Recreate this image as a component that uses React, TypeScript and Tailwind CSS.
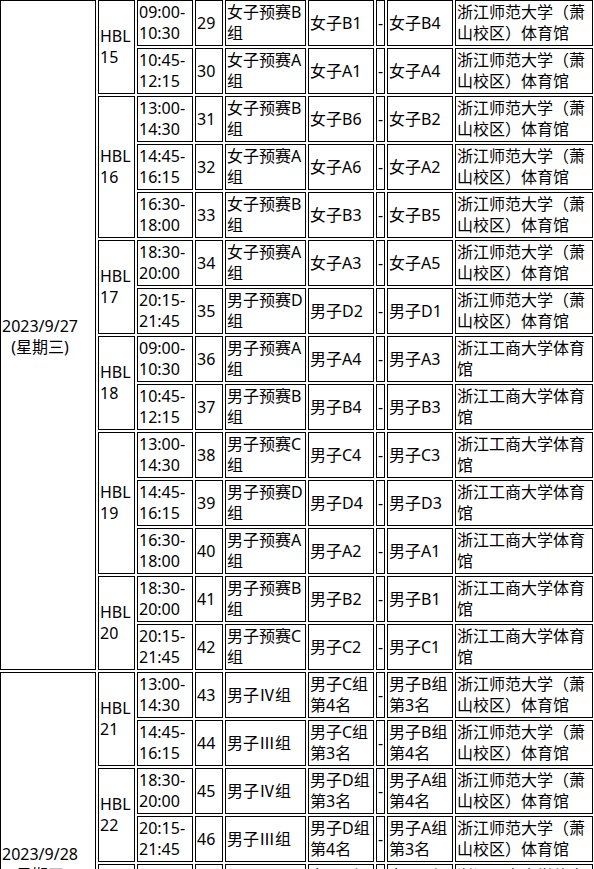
import React from 'react';

interface Game {
    no: number;
    time: [string, string];
    group: string[];
    home: string[];
    away: string[];
    venue: string[];
}

interface Round {
    code: string;
    games: Game[];
}

interface Day {
    date: string;
    week: string;
    rounds: Round[];
}

const SF = ['浙江师范大学（萧', '山校区）体育馆'];
const GS = ['浙江工商大学体育', '馆'];

const g = (no: number, t1: string, t2: string, group: string[], home: string[], away: string[], venue: string[]): Game => ({
    no,
    time: [t1, t2],
    group,
    home,
    away,
    venue,
});

const days: Day[] = [
    {
        date: '2023/9/27',
        week: '(星期三)',
        rounds: [
            {
                code: '15',
                games: [
                    g(29, '09:00-', '10:30', ['女子预赛B', '组'], ['女子B1'], ['女子B4'], SF),
                    g(30, '10:45-', '12:15', ['女子预赛A', '组'], ['女子A1'], ['女子A4'], SF),
                ],
            },
            {
                code: '16',
                games: [
                    g(31, '13:00-', '14:30', ['女子预赛B', '组'], ['女子B6'], ['女子B2'], SF),
                    g(32, '14:45-', '16:15', ['女子预赛A', '组'], ['女子A6'], ['女子A2'], SF),
                    g(33, '16:30-', '18:00', ['女子预赛B', '组'], ['女子B3'], ['女子B5'], SF),
                ],
            },
            {
                code: '17',
                games: [
                    g(34, '18:30-', '20:00', ['女子预赛A', '组'], ['女子A3'], ['女子A5'], SF),
                    g(35, '20:15-', '21:45', ['男子预赛D', '组'], ['男子D2'], ['男子D1'], SF),
                ],
            },
            {
                code: '18',
                games: [
                    g(36, '09:00-', '10:30', ['男子预赛A', '组'], ['男子A4'], ['男子A3'], GS),
                    g(37, '10:45-', '12:15', ['男子预赛B', '组'], ['男子B4'], ['男子B3'], GS),
                ],
            },
            {
                code: '19',
                games: [
                    g(38, '13:00-', '14:30', ['男子预赛C', '组'], ['男子C4'], ['男子C3'], GS),
                    g(39, '14:45-', '16:15', ['男子预赛D', '组'], ['男子D4'], ['男子D3'], GS),
                    g(40, '16:30-', '18:00', ['男子预赛A', '组'], ['男子A2'], ['男子A1'], GS),
                ],
            },
            {
                code: '20',
                games: [
                    g(41, '18:30-', '20:00', ['男子预赛B', '组'], ['男子B2'], ['男子B1'], GS),
                    g(42, '20:15-', '21:45', ['男子预赛C', '组'], ['男子C2'], ['男子C1'], GS),
                ],
            },
        ],
    },
    {
        date: '2023/9/28',
        week: '(星期四)',
        rounds: [
            {
                code: '21',
                games: [
                    g(43, '13:00-', '14:30', ['男子Ⅳ组'], ['男子C组', '第4名'], ['男子B组', '第3名'], SF),
                    g(44, '14:45-', '16:15', ['男子Ⅲ组'], ['男子C组', '第3名'], ['男子B组', '第4名'], SF),
                ],
            },
            {
                code: '22',
                games: [
                    g(45, '18:30-', '20:00', ['男子Ⅳ组'], ['男子D组', '第3名'], ['男子A组', '第4名'], SF),
                    g(46, '20:15-', '21:45', ['男子Ⅲ组'], ['男子D组', '第4名'], ['男子A组', '第3名'], SF),
                ],
            },
            {
                code: '23',
                games: [
                    g(47, '13:00-', '14:30', ['女子Ⅳ组'], ['女子A组', '第3名'], ['女子B组', '第4名'], GS),
                    g(48, '14:45-', '16:15', ['女子Ⅲ组'], ['女子A组', '第4名'], ['女子B组', '第3名'], GS),
                ],
            },
            {
                code: '24',
                games: [
                    g(49, '18:30-', '20:00', ['女子Ⅳ组'], ['女子B组', '第3名'], ['女子A组', '第4名'], GS),
                    g(50, '20:15-', '21:45', ['女子Ⅲ组'], ['女子B组', '第4名'], ['女子A组', '第3名'], GS),
                ],
            },
        ],
    },
];

// 1px black border, 1px padding, like an old border=1 table
const cell = 'border border-black p-px align-middle overflow-hidden';

const Lines = ({ lines }: { lines: string[] }) => (
    <>
        {lines.map((l, i) => (
            <React.Fragment key={i}>
                {i > 0 && <br />}
                {l}
            </React.Fragment>
        ))}
    </>
);

const App = () => {
    return (
        <div
            className="h-[869px] w-[594px] overflow-hidden bg-white text-black text-[16px] leading-[21px]"
            style={{ fontFamily: '"Noto Sans", "Noto Sans CJK SC", sans-serif' }}
        >
            <table className="-ml-[2px] -mt-[2px] w-[597px] table-fixed border-separate border-spacing-0.5 whitespace-nowrap text-left">
                <colgroup>
                    <col className="w-[96px]" />
                    <col className="w-[37px]" />
                    <col className="w-[56px]" />
                    <col className="w-[28px]" />
                    <col className="w-[81px]" />
                    <col className="w-[66px]" />
                    <col className="w-[9px]" />
                    <col className="w-[66px]" />
                    <col className="w-[138px]" />
                </colgroup>
                <tbody>
                    {days.map((day) => {
                        const dayRows = day.rounds.reduce((n, r) => n + r.games.length, 0);
                        return day.rounds.map((round, ri) =>
                            round.games.map((game, gi) => (
                                <tr key={game.no} className="h-[46px]">
                                    {ri === 0 && gi === 0 && (
                                        <td
                                            rowSpan={dayRows}
                                            className="border border-black pt-[5px] pb-px pl-px pr-[17px] align-middle text-center overflow-visible"
                                        >
                                            {day.date}
                                            <br />
                                            {day.week}
                                        </td>
                                    )}
                                    {gi === 0 && (
                                        <td rowSpan={round.games.length} className={cell}>
                                            HBL
                                            <br />
                                            {round.code}
                                        </td>
                                    )}
                                    <td className={cell}>
                                        <Lines lines={game.time} />
                                    </td>
                                    <td className={cell}>{game.no}</td>
                                    <td className={cell}>
                                        <Lines lines={game.group} />
                                    </td>
                                    <td className={cell}>
                                        <Lines lines={game.home} />
                                    </td>
                                    <td className={cell}>-</td>
                                    <td className={cell}>
                                        <Lines lines={game.away} />
                                    </td>
                                    <td className={cell}>
                                        <Lines lines={game.venue} />
                                    </td>
                                </tr>
                            ))
                        );
                    })}
                </tbody>
            </table>
        </div>
    );
};

export default App;
